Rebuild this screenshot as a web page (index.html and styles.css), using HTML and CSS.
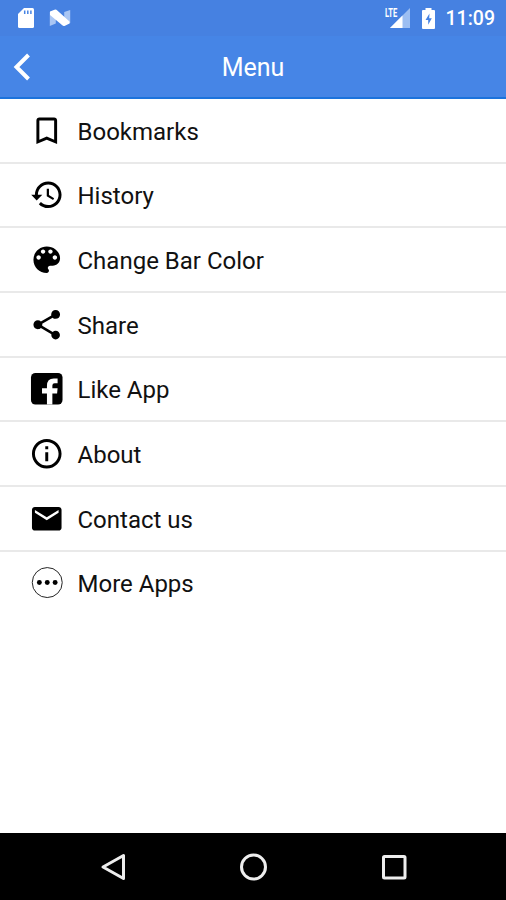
FILE: index.html
```html
<!DOCTYPE html>
<html lang="en">
<head>
<meta charset="utf-8">
<title>Menu</title>
<link rel="stylesheet" href="styles.css">
</head>
<body>
<div class="status">
  <svg class="sd" viewBox="0 0 16 20"><path d="M6 0h8.500q1.500 0 1.500 1.500v17q0 1.500-1.500 1.500h-13Q0 20 0 18.500V6z" fill="#fff"/><path d="M6.700 2.500v3.500M9.800 2.500v3.500M12.900 2.500v3.500" stroke="#4683e3" stroke-width="1.500"/></svg>
  <svg class="nougat" viewBox="0 0 22 18"><path d="M.8 3v14l6-2.500V6zM21.200 1v13l-6 2V3z" fill="#a9c6f4"/><path d="M1 2.500L5.500.8Q7 .2 8.300 1.500L20.500 12.500v2L16 16.700q-1.500.8-3-.6L1 6z" fill="#fff"/></svg>
  <span class="spacer"></span>
  <span class="signal"><span class="lte">LTE</span><svg viewBox="0 0 20 20"><path d="M20 0v20H0z" fill="#9cbef2"/><path d="M12.500 7.500V20H0z" fill="#fff"/></svg></span>
  <svg class="battery" viewBox="0 0 13 21"><path d="M3.500 0h6v2H12q1 0 1 1v17q0 1-1 1H1q-1 0-1-1V3q0-1 1-1h2.500z" fill="#fff"/><path d="M7.500 5.500L3.500 12h2.700v4.800L9.800 10.300H7.200z" fill="#4683e3"/></svg>
  <span class="clock">11:09</span>
</div>
<header class="bar">
  <svg class="back" viewBox="0 0 18 28"><path d="M15.500 2L3.500 14l12 12" fill="none" stroke="#fff" stroke-width="4"/></svg>
  <h1>Menu</h1>
</header>
<ul class="menu">
  <li><svg viewBox="0 0 24 24"><path d="M17 3H7c-1.100 0-1.990.9-1.990 2L5 21l7-3 7 3V5c0-1.100-.9-2-2-2zm0 15l-5-2.180L7 18V5h10v13z"/></svg><span>Bookmarks</span></li>
  <li><svg viewBox="0 0 24 24"><path d="M13 3c-4.970 0-9 4.030-9 9H1.500l3.700 3.890L9 12H6c0-3.870 3.130-7 7-7s7 3.130 7 7-3.130 7-7 7c-1.930 0-3.680-.79-4.940-2.060l-1.420 1.420C8.270 19.990 10.510 21 13 21c4.970 0 9-4.030 9-9s-4.030-9-9-9zm-1 5v5l4.280 2.540.72-1.210-3.500-2.080V8H12z"/></svg><span>History</span></li>
  <li><svg viewBox="0 0 24 24"><path d="M12 3c-4.970 0-9 4.030-9 9s4.030 9 9 9c.83 0 1.500-.67 1.500-1.500 0-.39-.15-.74-.39-1.010-.23-.26-.38-.61-.38-.99 0-.83.67-1.500 1.500-1.500H16c2.760 0 5-2.240 5-5 0-4.420-4.030-8-9-8zm-5.500 9c-.83 0-1.500-.67-1.500-1.500S5.670 9 6.500 9 8 9.670 8 10.500 7.330 12 6.500 12zm3-4C8.670 8 8 7.330 8 6.500S8.670 5 9.500 5s1.500.67 1.500 1.500S10.330 8 9.500 8zm5 0c-.83 0-1.500-.67-1.500-1.500S13.670 5 14.500 5s1.500.67 1.500 1.500S15.330 8 14.500 8zm3 4c-.83 0-1.500-.67-1.500-1.500S16.670 9 17.500 9s1.500.67 1.500 1.500-.67 1.500-1.500 1.500z"/></svg><span>Change Bar Color</span></li>
  <li><svg viewBox="0 0 24 24"><path d="M18 16.080c-.76 0-1.440.3-1.960.77L8.910 12.700c.05-.23.09-.46.09-.7s-.04-.47-.09-.7l7.050-4.110c.54.5 1.250.81 2.040.81 1.660 0 3-1.340 3-3s-1.340-3-3-3-3 1.340-3 3c0 .24.04.47.09.7L8.040 9.810C7.500 9.310 6.790 9 6 9c-1.660 0-3 1.340-3 3s1.340 3 3 3c.79 0 1.500-.31 2.040-.81l7.120 4.160c-.05.21-.08.43-.08.65 0 1.610 1.310 2.920 2.920 2.920s2.920-1.310 2.920-2.920-1.310-2.920-2.920-2.920z"/></svg><span>Share</span></li>
  <li><svg viewBox="0 0 36 36"><rect x="2" y="2" width="32" height="32" rx="4.500"/><path d="M18.200 34V22.800h-5V17.500h5v-2.500q0-7.500 7-7.500h3.800V12.500h-3q-2.300 0-2.300 2.300v2.700H29l-.5 5.300h-4.800V34z" fill="#fff"/></svg><span>Like App</span></li>
  <li><svg viewBox="0 0 24 24"><path d="M11 17h2v-6h-2v6zm1-15C6.480 2 2 6.480 2 12s4.480 10 10 10 10-4.480 10-10S17.520 2 12 2zm0 18c-4.410 0-8-3.590-8-8s3.590-8 8-8 8 3.590 8 8-3.590 8-8 8zM11 9h2V7h-2v2z"/></svg><span>About</span></li>
  <li><svg viewBox="0 0 24 24"><path d="M20 4H4c-1.100 0-1.990.9-1.990 2L2 18c0 1.100.9 2 2 2h16c1.100 0 2-.9 2-2V6c0-1.100-.9-2-2-2zm0 4l-8 5-8-5V6l8 5 8-5v2z"/></svg><span>Contact us</span></li>
  <li><svg viewBox="0 0 36 36"><circle cx="18.500" cy="17.800" r="15.200" fill="none" stroke="#222" stroke-width="1"/><circle cx="10.500" cy="17.800" r="2.500"/><circle cx="18.500" cy="17.800" r="2.500"/><circle cx="26.500" cy="17.800" r="2.500"/></svg><span>More Apps</span></li>
</ul>
<nav class="nav">
  <svg viewBox="0 0 32 32"><path d="M27.500 4.500v23L7 16z"/></svg>
  <svg viewBox="0 0 32 32"><circle cx="16.500" cy="16" r="12"/></svg>
  <svg viewBox="0 0 32 32"><rect x="5.500" y="5.500" width="21.500" height="21.500" rx="1"/></svg>
</nav>
</body>
</html>
```
FILE: styles.css
```css
* { box-sizing: border-box; }
body {
  margin: 0;
  height: 900px;
  display: flex;
  flex-direction: column;
  background: #fff;
  color: #111;
  font-family: Roboto, "Liberation Sans", sans-serif;
  overflow: hidden;
}
svg { display: block; flex: none; }
.status {
  height: 36px;
  padding: 0 11px 0 18px;
  display: flex;
  align-items: center;
  background: #4681e1;
  color: #fff;
}
.sd { width: 16px; height: 20px; }
.nougat { width: 22px; height: 18px; margin-left: 15px; }
.spacer { flex: 1; }
.signal { position: relative; width: 25px; height: 20px; padding-left: 5px; }
.signal svg { width: 20px; height: 20px; }
.lte {
  position: absolute;
  left: 0;
  top: -2px;
  font-size: 13.5px;
  line-height: 13px;
  font-weight: 700;
  transform: scaleX(.56);
  transform-origin: left;
}
.battery { width: 13px; height: 21px; margin: 0 11px 0 12px; }
.clock { font-size: 19.5px; font-weight: 500; line-height: 34px; padding-top: 2px; }
.bar {
  height: 63px;
  padding: 1px 15px 0 13px;
  display: grid;
  grid-template-columns: 18px 1fr 18px;
  align-items: center;
  background: #4685e6;
  border-bottom: 2px solid #1c73dc;
  color: #fff;
}
.back { width: 18px; height: 28px; margin-top: -1px; }
h1 {
  margin: 0;
  padding: 2px 0 0 2px;
  text-align: center;
  font-size: 25px;
  line-height: 30px;
  font-weight: 400;
}
.menu { flex: 1; margin: 0; padding: 0; list-style: none; }
.menu li {
  height: 64.7px;
  padding-left: 28.5px;
  display: flex;
  align-items: center;
  gap: 13.5px;
  border-bottom: 2px solid #e9e9e9;
  font-size: 24px;
}
.menu li span { padding-top: 2.5px; }
.menu li:last-child { border-bottom-color: transparent; }
.menu svg { width: 35.500px; height: 35.500px; fill: #000; }
.nav {
  height: 67px;
  padding: 0 96px;
  display: flex;
  align-items: center;
  justify-content: space-between;
  background: #000;
}
.nav svg { width: 32px; height: 32px; fill: none; stroke: #eee; stroke-width: 3; stroke-linejoin: round; }
```
